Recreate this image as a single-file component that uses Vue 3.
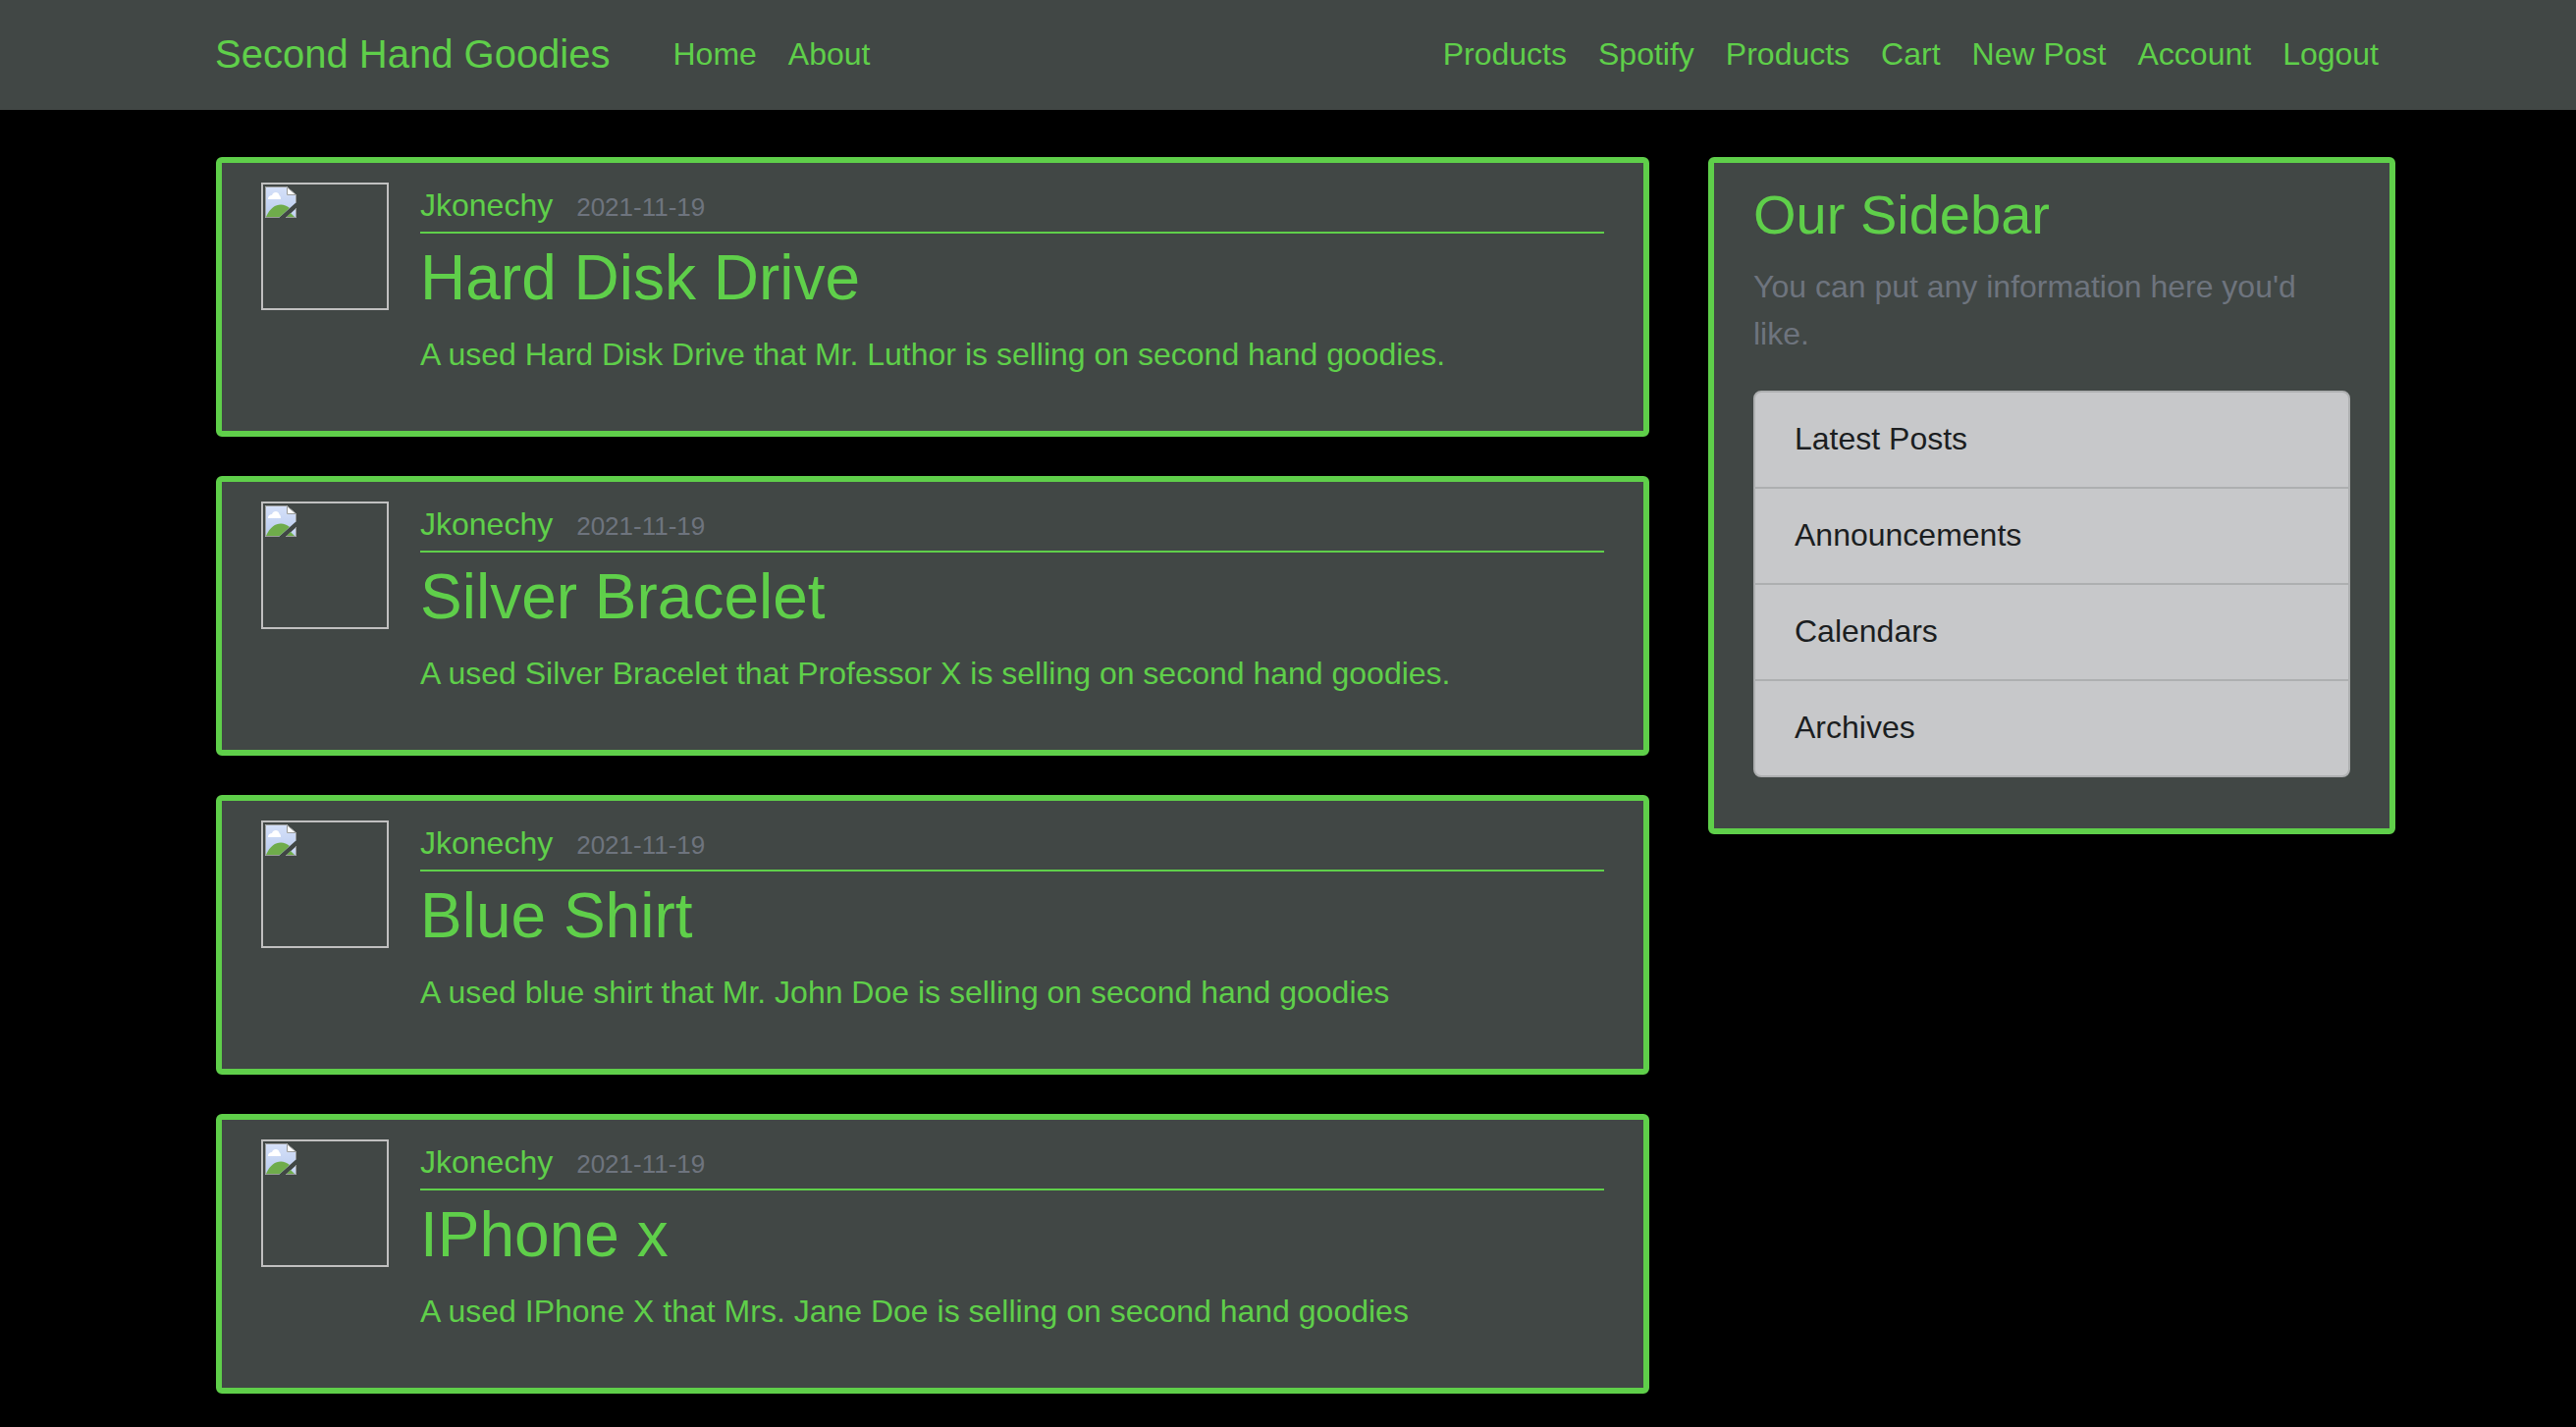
<script setup>
const primaryLinks = ['Home', 'About']
const accountLinks = ['Products', 'Spotify', 'Products', 'Cart', 'New Post', 'Account', 'Logout']

const posts = [
  {
    title: 'Hard Disk Drive',
    content: 'A used Hard Disk Drive that Mr. Luthor is selling on second hand goodies.',
  },
  {
    title: 'Silver Bracelet',
    content: 'A used Silver Bracelet that Professor X is selling on second hand goodies.',
  },
  {
    title: 'Blue Shirt',
    content: 'A used blue shirt that Mr. John Doe is selling on second hand goodies',
  },
  {
    title: 'IPhone x',
    content: 'A used IPhone X that Mrs. Jane Doe is selling on second hand goodies',
  },
]

const sidebarItems = ['Latest Posts', 'Announcements', 'Calendars', 'Archives']
</script>

<template>
  <div class="page">
    <header class="site-header">
      <nav class="navbar">
        <a class="brand" href="#">Second Hand Goodies</a>
        <div class="nav-group">
          <a v-for="(link, i) in primaryLinks" :key="i" class="nav-link" href="#">{{ link }}</a>
        </div>
        <div class="nav-group nav-right">
          <a v-for="(link, i) in accountLinks" :key="i" class="nav-link" href="#">{{ link }}</a>
        </div>
      </nav>
    </header>

    <main class="layout">
      <div class="posts">
        <article v-for="post in posts" :key="post.title" class="panel post">
          <div class="avatar">
            <svg class="avatar-icon" viewBox="0 0 32 32" aria-hidden="true">
              <defs>
                <linearGradient id="sky" x1="0" y1="0" x2="0" y2="1">
                  <stop offset="0" stop-color="#d6e1f9" />
                  <stop offset="1" stop-color="#b9cbee" />
                </linearGradient>
              </defs>
              <path d="M0 0H22L32 9V16L14 32H0Z" fill="url(#sky)" />
              <path d="M32 22V32H21Z" fill="url(#sky)" />
              <path d="M3 13C3 10 5 9 7 9C8 5 14 5 14.500 9C16 10 16 12 16 13Z" fill="#fff" />
              <path d="M1 31C7 17 18 16 25 22L15 31Z" fill="#6fac4b" />
              <path d="M26 27L30 31H22Z" fill="#6fac4b" />
              <path d="M22 0L32 9H22Z" fill="#fff" />
              <path d="M14 31.500H0.500V0.500H22L31.500 8.500V16M22.500 1V8.500H31.500M31.500 22V31.500H21" fill="none" stroke="#9a9c9b" stroke-width="1" />
            </svg>
          </div>
          <div class="post-body">
            <div class="post-meta">
              <a class="author" href="#">Jkonechy</a>
              <small class="date">2021-11-19</small>
            </div>
            <h2 class="post-title"><a href="#">{{ post.title }}</a></h2>
            <p class="post-content">{{ post.content }}</p>
          </div>
        </article>
      </div>

      <aside class="panel sidebar">
        <h3 class="sidebar-title">Our Sidebar</h3>
        <p class="sidebar-text">You can put any information here you'd like.</p>
        <ul class="list">
          <li v-for="item in sidebarItems" :key="item" class="list-item">{{ item }}</li>
        </ul>
      </aside>
    </main>
  </div>
</template>

<style>
body {
  margin: 0;
  background: #000;
}
</style>

<style scoped>
.page {
  font-family: Helvetica, "Liberation Sans", Arial, sans-serif;
  font-size: 32px;
  line-height: 48px;
  color: #5fcf4a;
}

.page * {
  box-sizing: border-box;
}

a {
  color: inherit;
  text-decoration: none;
}

.site-header {
  background: #414745;
}

.navbar {
  display: flex;
  align-items: center;
  min-height: 112px;
  padding: 0 185px 3px 219px;
}

.brand {
  margin-right: 48px;
  font-size: 40px;
  line-height: 60px;
}

.nav-group {
  display: flex;
}

.nav-right {
  margin-left: auto;
}

.nav-link {
  padding: 16px;
}

.layout {
  display: grid;
  grid-template-columns: minmax(0, 73fr) minmax(0, 35fr);
  align-items: start;
  gap: 60px;
  padding: 48px 184px 34px 220px;
}

.posts {
  display: flex;
  flex-direction: column;
  gap: 40px;
}

.panel {
  padding: 20px 40px;
  border: 6px solid #5fcf4a;
  border-radius: 6px;
  background: #414745;
}

.post {
  display: flex;
  align-items: flex-start;
  gap: 32px;
}

.avatar {
  display: flex;
  flex: none;
  width: 130px;
  height: 130px;
  padding: 2px;
  border: 2px solid #c0c0c0;
}

.avatar-icon {
  width: 32px;
  height: 32px;
}

.post-body {
  flex: 1;
  min-width: 0;
}

.post-meta {
  display: flex;
  align-items: baseline;
  gap: 24px;
  margin-bottom: 8px;
  padding-bottom: 4px;
  border-bottom: 2px solid #5fcf4a;
  line-height: 46px;
}

.date {
  font-size: 26px;
  line-height: 32px;
  color: #6e747e;
}

.post-title {
  margin: 0 0 16px;
  font-size: 64px;
  font-weight: 400;
  line-height: 75px;
}

.post-content {
  margin: 0 0 34px;
}

.sidebar-title {
  margin: 0 0 16px;
  font-size: 56px;
  font-weight: 400;
  line-height: 66px;
}

.sidebar-text {
  margin: 0 0 34px;
  color: #6e747e;
}

.list {
  margin: 0 0 32px;
  padding: 0;
  border: 2px solid #adafb0;
  border-radius: 8px;
  background: #c7c8ca;
  color: #1b1e21;
  list-style: none;
}

.list-item {
  padding: 23px 40px 25px;
}

.list-item + .list-item {
  border-top: 2px solid #adafb0;
}
</style>
